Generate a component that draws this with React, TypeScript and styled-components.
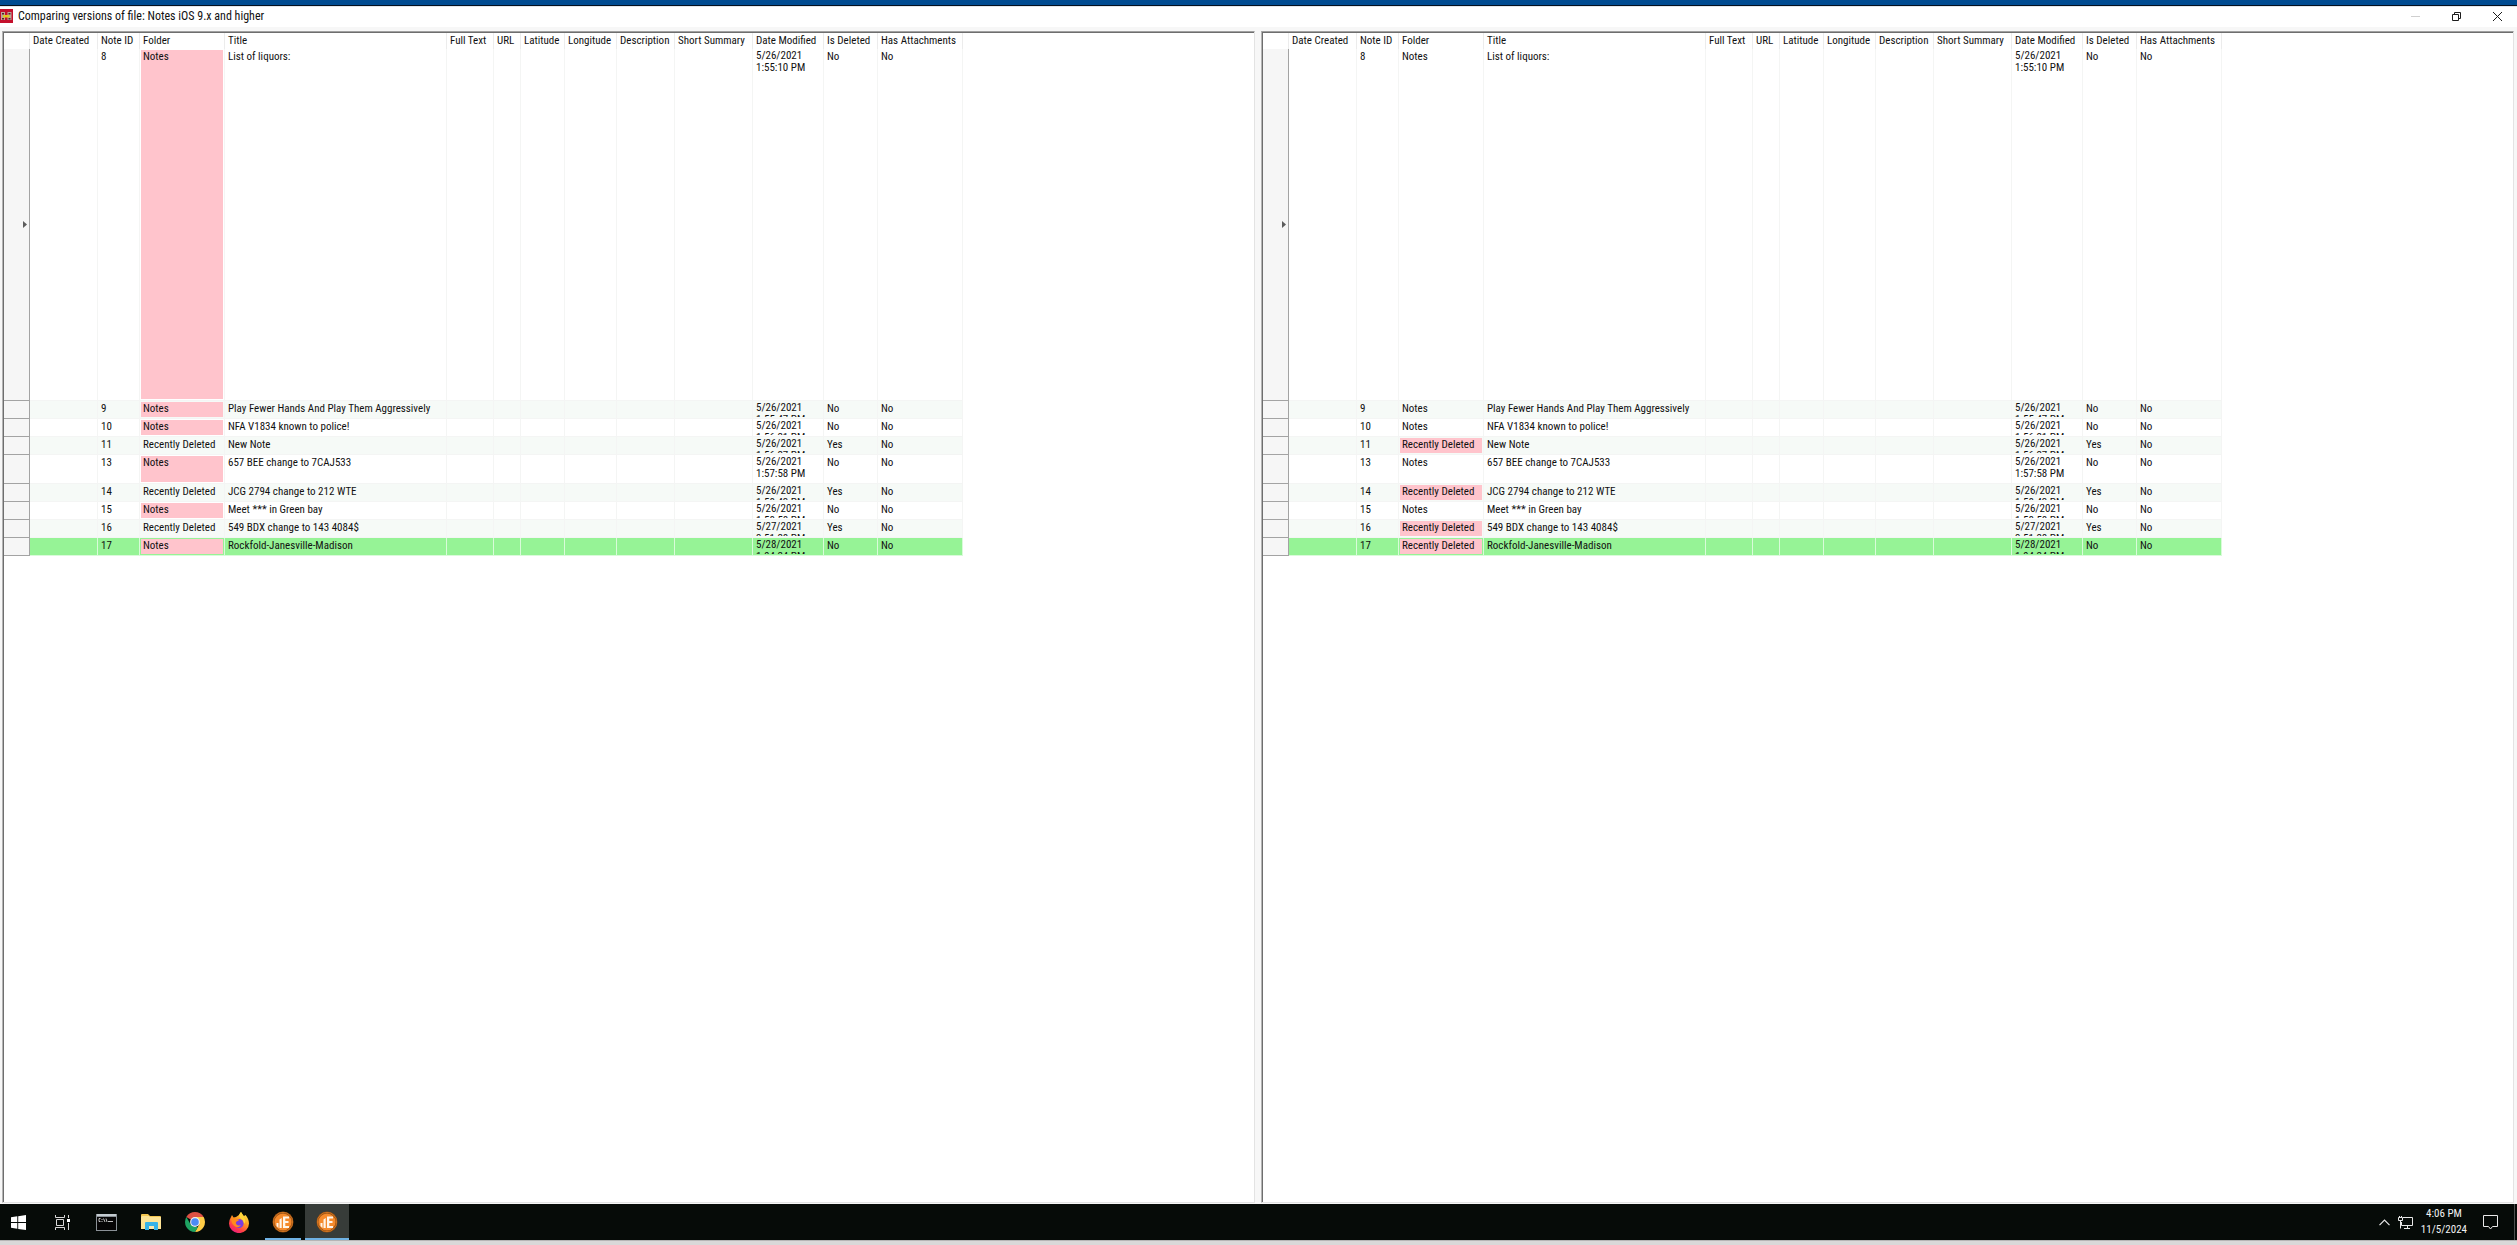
import React from 'react';
import styled, { createGlobalStyle } from 'styled-components';

const sans = '"Roboto Condensed", "Liberation Sans", Arial, sans-serif';

const GlobalStyle = createGlobalStyle`
  *, *::before, *::after { box-sizing: border-box; }
  body { margin: 0; background: #f7f7f7; font: 11px/12px ${sans}; color: #111; }
  button { font: inherit; color: inherit; border: 0; padding: 0; background: none; }
`;

const Desktop = styled.div`
  display: flex;
  flex-direction: column;
  min-height: 100vh;
`;

const TopEdge = styled.div`
  height: 6px;
  background: #004b91;
  border-bottom: 1px solid #04101f;
`;

const TitleBar = styled.header`
  display: flex;
  align-items: center;
  height: 21px;
  padding-bottom: 2px;
  background: #fff;
  border-top: 1px solid #e3e6ea;
`;

const AppIcon = styled.svg`
  width: 13px;
  height: 14px;
  margin-right: 5px;
`;

const Title = styled.h1`
  flex: 1;
  margin: 0;
  font-size: 12px;
  line-height: 18px;
  font-weight: 400;
`;

const Caption = styled.button<{ $muted?: boolean }>`
  display: flex;
  align-items: center;
  justify-content: center;
  width: 41px;
  height: 18px;
  padding-left: 2px;
  color: ${(p) => (p.$muted ? '#cfcfcf' : '#1c1c1c')};
`;

const Panels = styled.main`
  display: grid;
  grid-template-columns: 1fr 1fr;
  gap: 6px;
  flex: 1;
  padding: 4px 3px 1px 2px;
`;

const Panel = styled.section`
  padding: 1px;
  background: #fff;
  border: 1px solid #e3e3e3;
  border-top-color: #a0a0a0;
  border-left-color: #b4b4b4;
  box-shadow: inset 1px 1px 0 #6e6e6e;
  overflow: hidden;
`;

const Grid = styled.table`
  table-layout: fixed;
  width: 959px;
  border-collapse: separate;
  border-spacing: 0;
`;

const Col = styled.col<{ $w: number }>`
  width: ${(p) => p.$w}px;
`;

const Head = styled.th`
  height: 16px;
  padding: 0 0 0 3px;
  border-right: 1px solid #ececec;
  font-weight: 400;
  text-align: left;
  white-space: nowrap;
`;

const RowHead = styled.td`
  padding: 0 2px 0 0;
  background: #f6f6f6;
  border: solid #a3a3a3;
  border-width: 0 1px 1px 0;
`;

const Marker = styled.svg`
  display: block;
  width: 4px;
  height: 7px;
  margin-left: auto;
`;

type Tone = 'plain' | 'alt' | 'added';
const toneFill = { plain: '#ffffff', alt: '#f6faf7', added: '#96f396' };
const toneLine = { plain: '#f4f5f4', alt: '#f4f5f4', added: '#d9fbd9' };

const Row = styled.tr<{ $tone: Tone; $h: number }>`
  height: ${(p) => p.$h}px;
  background: ${(p) => toneFill[p.$tone]};
  --line: ${(p) => toneLine[p.$tone]};
`;

const Cell = styled.td<{ $wrap?: boolean }>`
  padding: ${(p) => (p.$wrap ? 0 : 1)}px 1px 1px;
  border: solid var(--line);
  border-width: 0 1px 1px 0;
  vertical-align: top;
  white-space: ${(p) => (p.$wrap ? 'normal' : 'nowrap')};
`;

const Value = styled.div<{ $h: number; $changed?: boolean }>`
  height: ${(p) => p.$h}px;
  padding: 1px 0 0 2px;
  overflow: hidden;
  background: ${(p) => (p.$changed ? '#ffc4cc' : 'transparent')};
`;

const Taskbar = styled.footer`
  display: flex;
  height: 36px;
  background: #060b08;
  color: #f2f2f2;
`;

const Task = styled.button<{ $active?: boolean; $open?: boolean; $first?: boolean }>`
  display: flex;
  align-items: center;
  justify-content: center;
  position: relative;
  width: ${(p) => (p.$first ? 41 : 44)}px;
  padding-right: ${(p) => (p.$first ? 4 : 1)}px;
  background: ${(p) => (p.$active ? '#373c39' : 'transparent')};
  &::after {
    content: '';
    display: ${(p) => (p.$active || p.$open ? 'block' : 'none')};
    position: absolute;
    bottom: 0;
    left: ${(p) => (p.$active ? 0 : 4)}px;
    right: ${(p) => (p.$active ? 0 : 4)}px;
    height: 2px;
    background: #6fb2e4;
  }
`;

const Tray = styled.div`
  display: flex;
  align-items: center;
  gap: 8px;
  margin-left: auto;
  padding-right: 2px;
`;

const Clock = styled.time`
  text-align: center;
  line-height: 16px;
  padding-right: 8px;
`;

const TrayButton = styled.button`
  display: flex;
`;

const ShowDesktop = styled.button`
  width: 1px;
  height: 36px;
  margin-left: 8px;
  background: #4c504e;
`;

const BottomEdge = styled.div`
  height: 5px;
  background: #d9d8d8;
  border-top: 1px solid #b5b5b5;
`;

const columns: [string, number][] = [
  ['Date Created', 68],
  ['Note ID', 42],
  ['Folder', 85],
  ['Title', 222],
  ['Full Text', 47],
  ['URL', 27],
  ['Latitude', 44],
  ['Longitude', 52],
  ['Description', 58],
  ['Short Summary', 78],
  ['Date Modified', 71],
  ['Is Deleted', 54],
  ['Has Attachments', 85],
];

type Note = {
  id: number;
  title: string;
  date: string;
  time: string;
  deleted: boolean;
  tone: Tone;
  height: number;
  left: string;
  right: string;
  changed: 'left' | 'right';
};

const N = 'Notes';
const D = 'Recently Deleted';

const notes: Note[] = [
  { id: 8, title: 'List of liquors:', date: '5/26/2021', time: '1:55:10 PM', deleted: false, tone: 'plain', height: 352, left: N, right: N, changed: 'left' },
  { id: 9, title: 'Play Fewer Hands And Play Them Aggressively', date: '5/26/2021', time: '1:55:47 PM', deleted: false, tone: 'alt', height: 18, left: N, right: N, changed: 'left' },
  { id: 10, title: 'NFA V1834 known to police!', date: '5/26/2021', time: '1:56:21 PM', deleted: false, tone: 'plain', height: 18, left: N, right: N, changed: 'left' },
  { id: 11, title: 'New Note', date: '5/26/2021', time: '1:56:27 PM', deleted: true, tone: 'alt', height: 18, left: D, right: D, changed: 'right' },
  { id: 13, title: '657 BEE change to 7CAJ533', date: '5/26/2021', time: '1:57:58 PM', deleted: false, tone: 'plain', height: 29, left: N, right: N, changed: 'left' },
  { id: 14, title: 'JCG 2794 change to 212 WTE', date: '5/26/2021', time: '1:58:43 PM', deleted: true, tone: 'alt', height: 18, left: D, right: D, changed: 'right' },
  { id: 15, title: 'Meet *** in Green bay', date: '5/26/2021', time: '1:58:58 PM', deleted: false, tone: 'plain', height: 18, left: N, right: N, changed: 'left' },
  { id: 16, title: '549 BDX change to 143 4084$', date: '5/27/2021', time: '3:51:28 PM', deleted: true, tone: 'alt', height: 18, left: D, right: D, changed: 'right' },
  { id: 17, title: 'Rockfold-Janesville-Madison', date: '5/28/2021', time: '1:04:24 PM', deleted: false, tone: 'added', height: 18, left: N, right: D, changed: 'left' },
];

function VersionPanel({ side }: { side: 'left' | 'right' }) {
  return (
    <Panel aria-label={side === 'left' ? 'First version' : 'Second version'}>
      <Grid>
        <colgroup>
          <Col $w={26} />
          {columns.map(([name, w]) => <Col key={name} $w={w} />)}
        </colgroup>
        <thead>
          <tr>
            <Head as="td" />
            {columns.map(([name]) => <Head key={name} scope="col">{name}</Head>)}
          </tr>
        </thead>
        <tbody>
          {notes.map((n) => {
            const h = n.height - 3;
            const changed = n.tone === 'added' || n.changed === side;
            const values = ['', n.id, side === 'left' ? n.left : n.right, n.title, '', '', '', '', '', ''];
            return (
              <Row key={n.id} $tone={n.tone} $h={n.height}>
                <RowHead>
                  {n.id === 8 && (
                    <Marker viewBox="0 0 4 7"><path d="M0 0L4 3.5L0 7z" fill="#5c5c5c" /></Marker>
                  )}
                </RowHead>
                {values.map((v, i) => (
                  <Cell key={i}><Value $h={h} $changed={i === 2 && changed}>{v}</Value></Cell>
                ))}
                <Cell $wrap><Value $h={h + 1}>{n.date}<br />{n.time}</Value></Cell>
                <Cell><Value $h={h}>{n.deleted ? 'Yes' : 'No'}</Value></Cell>
                <Cell><Value $h={h}>No</Value></Cell>
              </Row>
            );
          })}
        </tbody>
      </Grid>
    </Panel>
  );
}

const WindowsIcon = () => (
  <svg width="15" height="15" viewBox="0 0 15 15" fill="#fff">
    <path d="M0 2.2L6.3 1.3V7H0zM7.2 1.2L15 0V7H7.2zM0 8H6.3V13.7L0 12.8zM7.2 8H15V15L7.2 13.9z" />
  </svg>
);

const TaskViewIcon = () => (
  <svg width="16" height="15" viewBox="0 0 16 15" fill="none" stroke="#d8d8d8">
    <path d="M.5 0V2.5H9.5V0M.5 15V12.5H9.5V15M1.5 4.5H8.5V10.5H1.5zM13.5 0V3M13.5 8V15" />
    <path d="M12 4H15V7H12z" fill="#fff" stroke="none" />
  </svg>
);

const TerminalIcon = () => (
  <svg width="21" height="17" viewBox="0 0 21 17">
    <path d="M0 0H21V17H0z" fill="#8a9196" />
    <path d="M1 0H20V2H1z" fill="#c3ccd1" />
    <path d="M1 3H20V16H1z" fill="#050505" />
    <path d="M4.5 4.5H3V7.5H4.5M6 5V6M6 7V8M7.500 4.500L9 8M10 4.500L11 8M12 7.500H17" fill="none" stroke="#d5d5d5" strokeWidth=".9" />
  </svg>
);

const FolderIcon = () => (
  <svg width="20" height="17" viewBox="0 0 20 17">
    <path d="M0 1Q0 0 1 0H7L9 2H19Q20 2 20 3V15H0z" fill="#f3c64f" />
    <path d="M1 2H8L9 3H20V15H0V3z" fill="#fde495" />
    <path d="M4 9Q4 8 5 8H16Q17 8 17 9V16H13V12H8V16H4z" fill="#36b3e8" />
    <path d="M8 12H13V15H8z" fill="#fbe9b0" />
  </svg>
);

const ChromeIcon = () => (
  <svg width="20" height="20" viewBox="0 0 20 20">
    <path d="M10 10L1.340 5A10 10 0 0 1 18.660 5z" fill="#dd5144" />
    <path d="M10 5H18.660A10 10 0 0 1 10 20L14.300 12.500z" fill="#ffcd46" />
    <path d="M1.340 5L5.700 12.500L10 15H12.900L10 20A10 10 0 0 1 1.340 5z" fill="#1ea362" />
    <circle cx="10" cy="10" r="4.900" fill="#f1f1f1" />
    <circle cx="10" cy="10" r="3.800" fill="#4c8bf5" />
  </svg>
);

const FirefoxIcon = () => (
  <svg width="20" height="21" viewBox="0 0 20 21">
    <defs>
      <linearGradient id="fox" x1=".8" y1="0" x2=".2" y2="1">
        <stop offset="0" stopColor="#fff04a" />
        <stop offset=".4" stopColor="#ff9a20" />
        <stop offset=".75" stopColor="#ff3a4a" />
        <stop offset="1" stopColor="#e6188c" />
      </linearGradient>
    </defs>
    <path d="M2 5L3 3L4.500 5.500L7 5Q10 4 12 0Q14 3 15 4L16.500 3Q20 7 20 11.500A9.900 9.500 0 0 1 0 11.500Q0 8 2 5z" fill="url(#fox)" />
    <circle cx="10" cy="11.500" r="4.600" fill="#7a3ee0" />
    <path d="M2 6Q5 5 7 7L10 7.500Q10 9 7.500 9.500Q6 11 7.500 12.500Q9 14 12 13Q9 17 5.500 14Q2 11 2 6z" fill="#ff8b1c" />
    <path d="M12 0Q9 3 11 6Q15 8 15 12Q17 10 16 7Q14 4 12 0z" fill="#ffd53a" />
  </svg>
);

const ExaminerIcon = () => (
  <svg width="22" height="22" viewBox="0 0 22 22">
    <circle cx="11" cy="11" r="10.500" fill="#8f4c12" />
    <circle cx="11" cy="11" r="9.600" fill="none" stroke="#e07e25" strokeWidth=".8" />
    <circle cx="11" cy="11" r="8.600" fill="#f58a2b" />
    <path d="M4.500 12H6.500V17L4.500 15zM7.500 8.500L9.700 7V17H7.500zM11 5.500H17V7.500H13.300V10H16.500V12H13.300V15H17V17H11z" fill="#fff5ea" />
  </svg>
);

export default function App() {
  return (
    <Desktop>
      <GlobalStyle />
      <TopEdge />
      <TitleBar>
        <AppIcon viewBox="0 0 13 14">
          <path d="M0 0H13V14H0z" fill="#c4102c" />
          <path d="M1 3H5V11H1zM7.500 3H11.500V11H7.500z" fill="#b9a79a" />
          <path d="M2 4H4V5.500H2zM2 9H4V10.500H2zM8.500 4H10.500V5.500H8.500zM8.500 9H10.500V10.500H8.500z" fill="#5a2222" />
          <path d="M3 6H9.500V8.500H3z" fill="#e0c81e" />
        </AppIcon>
        <Title>Comparing versions of file: Notes iOS 9.x and higher</Title>
        <Caption $muted aria-label="Minimize">
          <svg width="9" height="9" viewBox="0 0 9 9" stroke="currentColor"><path d="M0 4.500H9" /></svg>
        </Caption>
        <Caption aria-label="Restore">
          <svg width="9" height="9" viewBox="0 0 9 9" fill="none" stroke="currentColor"><path d="M.5 2.500H6.500V8.500H.5zM2.500 2.500V.5H8.500V6.500H6.500" /></svg>
        </Caption>
        <Caption aria-label="Close">
          <svg width="9" height="9" viewBox="0 0 9 9" stroke="currentColor"><path d="M0 0L9 9M9 0L0 9" /></svg>
        </Caption>
      </TitleBar>
      <Panels>
        <VersionPanel side="left" />
        <VersionPanel side="right" />
      </Panels>
      <Taskbar>
        <Task $first aria-label="Start"><WindowsIcon /></Task>
        <Task aria-label="Task view"><TaskViewIcon /></Task>
        <Task aria-label="Command prompt"><TerminalIcon /></Task>
        <Task aria-label="File Explorer"><FolderIcon /></Task>
        <Task aria-label="Chrome"><ChromeIcon /></Task>
        <Task aria-label="Firefox"><FirefoxIcon /></Task>
        <Task $open aria-label="Examiner"><ExaminerIcon /></Task>
        <Task $active aria-label="Examiner comparison"><ExaminerIcon /></Task>
        <Tray>
          <TrayButton aria-label="Show hidden icons">
            <svg width="11" height="7" viewBox="0 0 11 7" fill="none" stroke="#e8e8e8" strokeWidth="1.200"><path d="M.5 6.200L5.500 1L10.500 6.200" /></svg>
          </TrayButton>
          <TrayButton aria-label="Network">
            <svg width="15" height="13" viewBox="0 0 15 13" fill="none" stroke="#e8e8e8">
              <path d="M5 1.500H14.500V9.500H3.500V6M9.500 9.500V12M6 12.500H12M2.500 5V12.500" />
              <path d="M.5 1.500H4.500V4.500H.5zM1.500 0V1M3.500 0V1" />
            </svg>
          </TrayButton>
          <Clock>4:06 PM<br />11/5/2024</Clock>
          <TrayButton aria-label="Notifications">
            <svg width="15" height="15" viewBox="0 0 15 15" fill="none" stroke="#e8e8e8"><path d="M.5 .5H14.500V11.500H9.500L7.500 14L5.500 11.500H.5z" /></svg>
          </TrayButton>
          <ShowDesktop aria-label="Show desktop" />
        </Tray>
      </Taskbar>
      <BottomEdge />
    </Desktop>
  );
}
